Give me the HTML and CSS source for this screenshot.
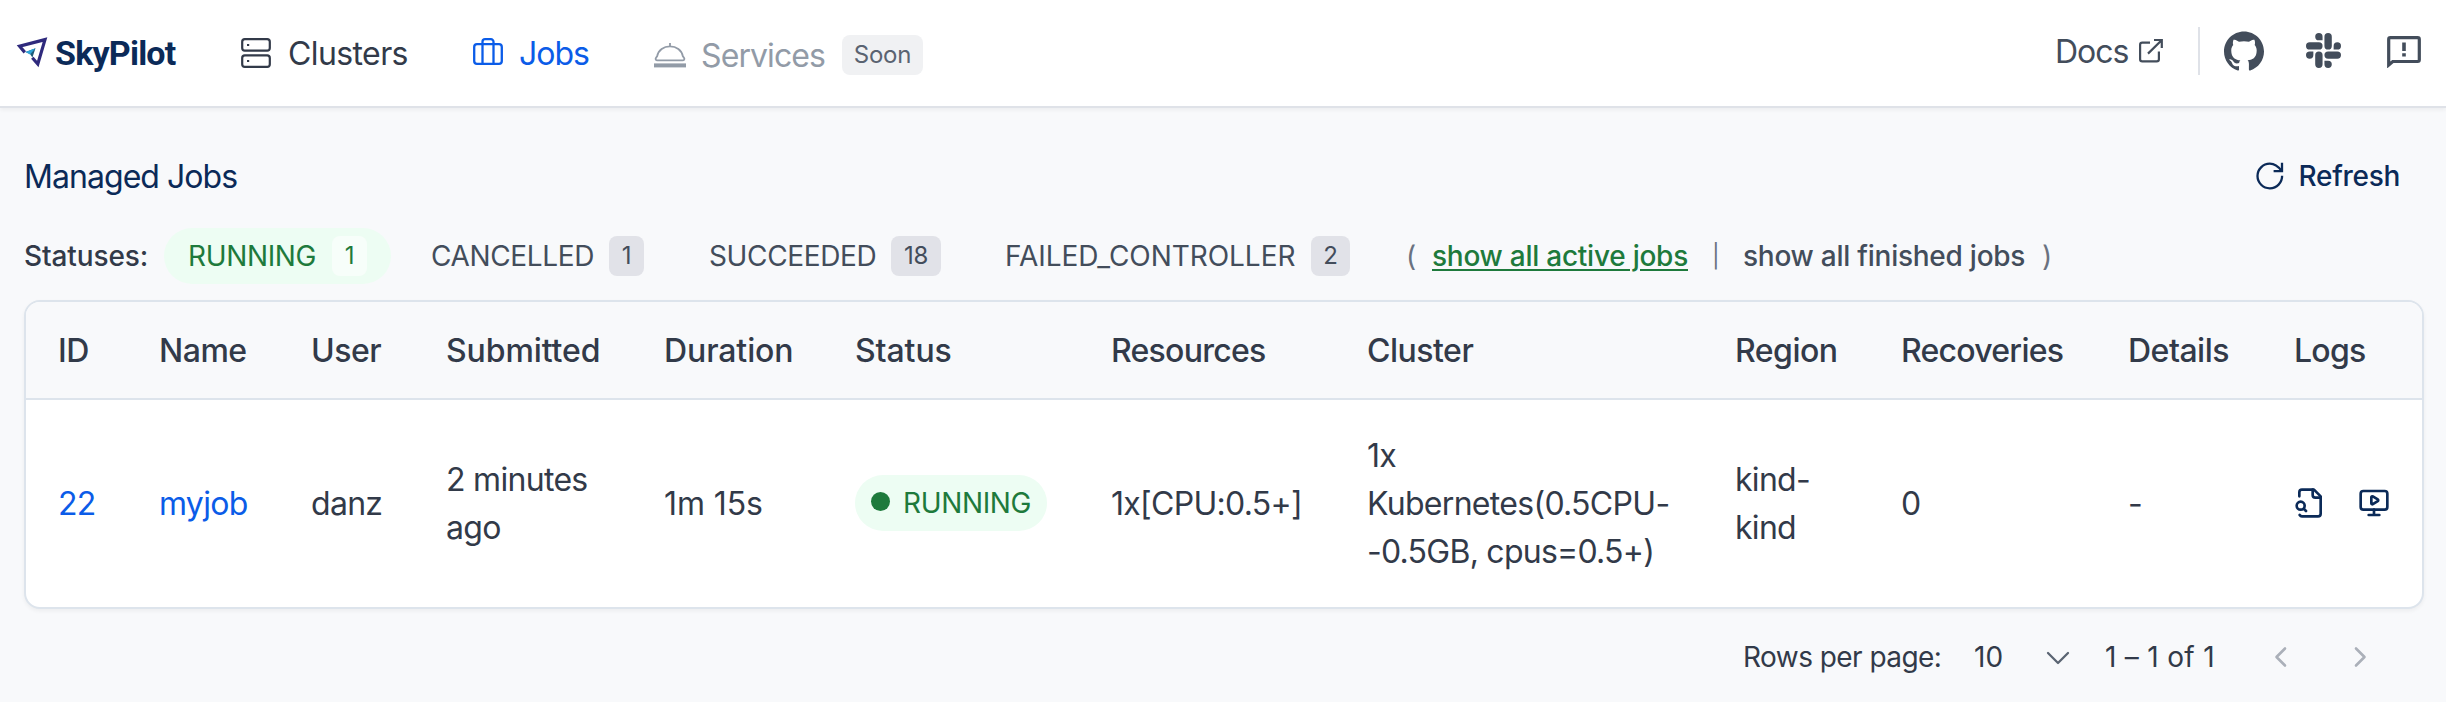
FILE: index.html
```html
<!DOCTYPE html>
<html lang="en">
<head>
<meta charset="utf-8">
<title>SkyPilot Dashboard</title>
<link rel="stylesheet" href="styles.css">
</head>
<body>
<header class="topbar">
  <a class="brand">
    <svg class="brand-mark" width="34" height="34" viewBox="0 0 34 34"><path d="M9.8 17.4 4.6 11.200 30 4.600 22.800 29 17.300 22.800" fill="none" stroke="#2f2a7d" stroke-width="3.200"/><path d="M10.500 17 20.500 13.200 17.400 22.600 15 19Z" fill="#1d5b79"/><path d="M10.500 17 20.500 13.200 15 19.600Z" fill="#2fa4d9"/></svg>
    <span class="brand-name">SkyPilot</span>
  </a>
  <nav class="nav">
    <a class="nav-item clusters">
      <svg width="30" height="30" viewBox="0 0 30 30" fill="none" stroke="currentColor" stroke-width="2.2"><rect x="1.2" y="1.2" width="27.6" height="11.4" rx="2.6"/><rect x="1.2" y="17.4" width="27.6" height="11.4" rx="2.6"/><path d="M6 7h2.2M6 23h2.2"/></svg>
      <span>Clusters</span>
    </a>
    <a class="nav-item jobs">
      <svg width="30" height="27" viewBox="0 0 30 27" fill="none" stroke="currentColor" stroke-width="2.3"><rect x="1.2" y="6.2" width="27.6" height="19.6" rx="2.8"/><path d="M9.5 25.8V3.8a2.6 2.6 0 0 1 2.6-2.6h5.8a2.6 2.6 0 0 1 2.6 2.6v22"/></svg>
      <span>Jobs</span>
    </a>
    <a class="nav-item services">
      <svg width="32" height="25" viewBox="0 0 32 25" fill="none" stroke="currentColor"><path d="M0 22.4h32" stroke-width="4"/><path d="M3.4 17.4h25.2c1.6 0 2.2-1.4 1.5-2.5l-1.3-1.8C27.6 7.2 22.4 3.4 16 3.4S4.4 7.2 3.2 13.1L1.9 14.9c-.7 1.1-.1 2.5 1.5 2.5ZM16 3.4V0" stroke-width="1.8"/></svg>
      <span>Services</span>
      <em class="soon">Soon</em>
    </a>
  </nav>
  <div class="links">
    <a class="docs"><span>Docs</span>
      <svg width="26" height="26" viewBox="0 0 26 26" fill="none" stroke="currentColor" stroke-width="2.2"><path d="M12 4.6H4.3a2.2 2.2 0 0 0-2.2 2.2v14.4a2.2 2.2 0 0 0 2.2 2.2h14.4a2.2 2.2 0 0 0 2.2-2.2V13.5M16 2h7.8v8M23.6 2.2 10 15.6"/></svg>
    </a>
    <i class="rule"></i>
    <svg class="github" width="40" height="40" viewBox="0 0 24 24" fill="currentColor"><path d="M12 .297c-6.63 0-12 5.373-12 12 0 5.303 3.438 9.8 8.205 11.385.6.113.82-.258.82-.577 0-.285-.01-1.04-.015-2.04-3.338.724-4.042-1.61-4.042-1.61C4.422 18.07 3.633 17.7 3.633 17.7c-1.087-.744.084-.729.084-.729 1.205.084 1.838 1.236 1.838 1.236 1.07 1.835 2.809 1.305 3.495.998.108-.776.417-1.305.76-1.605-2.665-.3-5.466-1.332-5.466-5.93 0-1.31.465-2.38 1.235-3.22-.135-.303-.54-1.523.105-3.176 0 0 1.005-.322 3.3 1.23.96-.267 1.98-.399 3-.405 1.02.006 2.04.138 3 .405 2.28-1.552 3.285-1.23 3.285-1.23.645 1.653.24 2.873.12 3.176.765.84 1.23 1.91 1.23 3.22 0 4.61-2.805 5.625-5.475 5.92.42.36.81 1.096.81 2.22 0 1.606-.015 2.896-.015 3.286 0 .315.21.69.825.57C20.565 22.092 24 17.592 24 12.297c0-6.627-5.373-12-12-12"/></svg>
    <svg class="slack" width="35" height="35" viewBox="0 0 24 24" fill="currentColor"><path d="M5.042 15.165a2.528 2.528 0 0 1-2.52 2.523A2.528 2.528 0 0 1 0 15.165a2.527 2.527 0 0 1 2.522-2.52h2.52v2.52zM6.313 15.165a2.527 2.527 0 0 1 2.521-2.52 2.527 2.527 0 0 1 2.521 2.52v6.313A2.528 2.528 0 0 1 8.834 24a2.528 2.528 0 0 1-2.521-2.522v-6.313zM8.834 5.042a2.528 2.528 0 0 1-2.521-2.52A2.528 2.528 0 0 1 8.834 0a2.528 2.528 0 0 1 2.521 2.522v2.52H8.834zM8.834 6.313a2.528 2.528 0 0 1 2.521 2.521 2.528 2.528 0 0 1-2.521 2.521H2.522A2.528 2.528 0 0 1 0 8.834a2.528 2.528 0 0 1 2.522-2.521h6.312zM18.956 8.834a2.528 2.528 0 0 1 2.522-2.521A2.528 2.528 0 0 1 24 8.834a2.528 2.528 0 0 1-2.522 2.521h-2.522V8.834zM17.688 8.834a2.528 2.528 0 0 1-2.523 2.521 2.527 2.527 0 0 1-2.52-2.521V2.522A2.527 2.527 0 0 1 15.165 0a2.528 2.528 0 0 1 2.523 2.522v6.312zM15.165 18.956a2.528 2.528 0 0 1 2.523 2.522A2.528 2.528 0 0 1 15.165 24a2.527 2.527 0 0 1-2.52-2.522v-2.522h2.52zM15.165 17.688a2.527 2.527 0 0 1-2.52-2.523 2.526 2.526 0 0 1 2.52-2.52h6.313A2.527 2.527 0 0 1 24 15.165a2.528 2.528 0 0 1-2.522 2.523h-6.313z"/></svg>
    <svg class="feedback" width="34" height="32" viewBox="0 0 34 32" fill="none" stroke="currentColor" stroke-width="3.2"><path d="M1.7 29V3.4q0-1.7 1.7-1.7h27.2q1.7 0 1.7 1.7v20.4q0 1.7-1.7 1.7H5.8Z"/><path d="M17 6.5v8.5M17 17.2v3.2" stroke-width="3.6"/></svg>
  </div>
</header>
<main class="page">
  <div class="title-row">
    <h1>Managed Jobs</h1>
    <button class="refresh">
      <svg width="28" height="28" viewBox="0 0 28 28" fill="none" stroke="currentColor" stroke-width="2.3"><path d="M26.1 13.8A12.3 12.3 0 1 1 13.8 1.7c4.6 0 8.2 2.3 11.6 7.2M26 .8v8.4h-8.4"/></svg>
      <span>Refresh</span>
    </button>
  </div>
  <div class="filters">
    <span class="filters-label">Statuses:</span>
    <span class="filter active"><span class="running">RUNNING</span><b>1</b></span>
    <span class="filter cancelled"><span>CANCELLED</span><b>1</b></span>
    <span class="filter succeeded"><span>SUCCEEDED</span><b class="wide">18</b></span>
    <span class="filter failed"><span>FAILED_CONTROLLER</span><b class="two">2</b></span>
    <span class="quick"><span class="paren">(</span><a class="on">show all active jobs</a><span class="bar">|</span><a class="off">show all finished jobs</a><span>)</span></span>
  </div>
  <div class="card">
    <table>
      <colgroup><col class="c-id"><col class="c-name"><col class="c-user"><col class="c-sub"><col class="c-dur"><col class="c-status"><col class="c-res"><col class="c-cluster"><col class="c-region"><col class="c-rec"><col class="c-det"><col class="c-logs"></colgroup>
      <thead><tr><th>ID</th><th>Name</th><th>User</th><th class="loose">Submitted</th><th class="loose">Duration</th><th class="loose">Status</th><th class="tight">Resources</th><th>Cluster</th><th>Region</th><th class="tight">Recoveries</th><th>Details</th><th class="tight">Logs</th></tr></thead>
      <tbody><tr>
        <td><a>22</a></td><td><a>myjob</a></td><td>danz</td><td>2 minutes<br>ago</td><td class="loose">1m 15s</td>
        <td><span class="status"><i></i><span class="running">RUNNING</span></span></td>
        <td class="nowrap">1x[CPU:0.5+]</td><td class="nowrap">1x<br>Kubernetes(0.5CPU-<br><span class="tight">-0.5GB, cpus=0.5+)</span></td><td>kind-<br>kind</td><td>0</td><td>-</td>
        <td><span class="logs">
          <svg width="32" height="32" viewBox="0 0 24 24" fill="none" stroke="currentColor" stroke-width="2" stroke-linecap="round" stroke-linejoin="round"><path d="M14 2v4a2 2 0 0 0 2 2h4"/><path d="M4.268 21a2 2 0 0 0 1.727 1H18a2 2 0 0 0 2-2V7l-5-5H6a2 2 0 0 0-2 2v3"/><path d="m9 18-1.5-1.5"/><circle cx="5" cy="14" r="3"/></svg>
          <svg width="32" height="32" viewBox="0 0 24 24" fill="none" stroke="currentColor" stroke-width="2" stroke-linecap="round" stroke-linejoin="round"><path d="M10 7.75a.75.75 0 0 1 1.142-.638l3.664 2.249a.75.75 0 0 1 0 1.278l-3.664 2.25a.75.75 0 0 1-1.142-.64z"/><path d="M12 17v4M8 21h8"/><rect x="2" y="3" width="20" height="14" rx="2"/></svg>
        </span></td>
      </tr></tbody>
    </table>
  </div>
  <div class="pager">
    <span class="rows">Rows per page:</span><span class="size">10</span>
    <svg class="caret" width="24" height="14" viewBox="0 0 24 14" fill="none" stroke="#5b6573" stroke-width="2.3" stroke-linecap="round" stroke-linejoin="round"><path d="m2 2 10 10L22 2"/></svg>
    <span class="range">1 – 1 of 1</span>
    <svg class="prev" width="14" height="22" viewBox="0 0 14 22" fill="none" stroke="#abb0b9" stroke-width="2.6" stroke-linecap="round" stroke-linejoin="round"><path d="m11 2.5-8.5 8.5 8.5 8.5"/></svg>
    <svg class="next" width="14" height="22" viewBox="0 0 14 22" fill="none" stroke="#abb0b9" stroke-width="2.6" stroke-linecap="round" stroke-linejoin="round"><path d="m3 2.5 8.5 8.5L3 19.5"/></svg>
  </div>
</main>
</body>
</html>
```
FILE: styles.css
```css
* { box-sizing: border-box; }
body { margin: 0; height: 702px; overflow: hidden; background: #f8f9fb; color: #323a49; font-family: Inter, "Liberation Sans", sans-serif; font-size: 32px; line-height: 48px; }
svg { display: block; flex: none; }
.topbar { display: flex; align-items: flex-start; height: 108px; background: #fff; border-bottom: 2px solid #dfe2e8; box-shadow: 0 2px 4px rgba(0,0,0,.05); white-space: nowrap; }
.brand { display: flex; gap: 6px; padding: 29px 0 0 15px; width: 241px; color: #0b2a58; }
.brand-mark { margin-top: 6px; }
.brand-name { font-family: Roboto, sans-serif; font-size: 34px; font-weight: 700; letter-spacing: -.8px; }
.nav { display: flex; letter-spacing: -.6px; }
.nav-item { display: flex; padding-top: 30px; }
.nav-item > svg { margin-right: 17px; margin-top: 8px; }
.clusters { width: 232px; }
.jobs { width: 181px; color: #0b5ce8; letter-spacing: -1px; }
.jobs > svg { margin-right: 16px; }
.services { color: #929ba7; padding-top: 32px; letter-spacing: -.9px; }
.services > svg { margin-top: 11px; margin-right: 15px; }
.services > span { width: 141px; }
.soon { margin-top: 3px; width: 81px; height: 40px; border-radius: 8px; background: #f0f1f3; color: #5a6371; font-size: 24px; font-style: normal; line-height: 40px; letter-spacing: -.2px; text-align: center; }
.links { display: flex; margin-left: auto; padding-right: 25px; color: #434d5b; }
.docs { display: flex; padding-top: 28px; width: 143px; letter-spacing: -1px; }
.docs > span { width: 83px; }
.docs > svg { margin-top: 10px; }
.rule { width: 2px; height: 48px; margin: 27px 24px 0 0; background: #dfe2e8; }
.github { margin: 31px 42px 0 0; }
.slack { margin: 33px 46px 0 0; }
.feedback { margin-top: 36px; }
.page { padding: 45px 22px 0 24px; }
.title-row { display: flex; justify-content: space-between; height: 75px; }
h1 { margin: 0; font-size: 32px; font-weight: 400; letter-spacing: -.95px; color: #0b2a58; }
.refresh { display: flex; gap: 15px; height: 48px; padding: 0; margin: -1px 24px 0 0; border: 0; background: none; color: #0b2a58; font: 500 28px/48px Inter, sans-serif; letter-spacing: -.3px; }
.refresh svg { margin-top: 10px; }
.filters { display: flex; height: 56px; font-size: 28px; line-height: 56px; white-space: nowrap; color: #434d5b; }
.filters-label { width: 140px; font-weight: 500; letter-spacing: -.1px; color: #323a49; }
.filter { display: flex; align-items: center; justify-content: space-between; height: 56px; padding: 0 24px; border-radius: 28px; letter-spacing: -.35px; }
.filter b { width: 35px; height: 40px; border-radius: 8px; background: #e1e2e8; font-size: 24px; font-weight: 400; line-height: 40px; text-align: center; }
.filter b.wide { width: 50px; }
.filter b.two { width: 39px; }
.active { width: 227px; background: #edfdf3; color: #1e7a3c; }
.active b { background: #f7fefa; }
.cancelled { width: 262px; margin-left: 15px; padding-left: 25px; }
.succeeded { width: 280px; margin-left: 17px; }
.failed { width: 393px; margin-left: 16px; letter-spacing: -.05px; }
.quick { display: flex; margin-left: 32px; color: #6a7280; }
.quick a { font-weight: 500; letter-spacing: -.25px; }
.paren { width: 26px; }
.on { width: 280px; color: #1e7a3c; text-decoration: underline; text-underline-offset: 3px; text-decoration-thickness: 2px; }
.bar { width: 31px; font-size: 23px; line-height: 56px; }
.off { width: 299px; color: #434d5b; }
.card { margin-top: 16px; height: 309px; overflow: hidden; border: 2px solid #dde4ec; border-radius: 16px; background: #fff; box-shadow: 0 2px 4px rgba(0,0,0,.05); }
table { width: 2396px; table-layout: fixed; border-collapse: collapse; }
th { height: 97px; padding: 2px 0 0 32px; border-bottom: 2px solid #dde4ec; background: #f8f9fb; font-weight: 500; letter-spacing: -.5px; text-align: left; }
td { height: 208px; padding: 0 0 0 32px; vertical-align: middle; letter-spacing: -.7px; }
th.loose, td.loose { letter-spacing: -.1px; }
.tight, th.tight { letter-spacing: -.75px; }
td a { color: #0b5ce8; }
.nowrap { white-space: nowrap; }
.c-id { width: 101px; } .c-name { width: 152px; } .c-user { width: 135px; } .c-sub { width: 218px; }
.c-dur { width: 191px; } .c-status { width: 256px; } .c-res { width: 256px; } .c-cluster { width: 368px; }
.c-region { width: 166px; } .c-rec { width: 227px; } .c-det { width: 166px; } .c-logs { width: 160px; }
.status { display: flex; align-items: center; width: 192px; height: 56px; margin-top: -1px; padding-left: 16px; border-radius: 28px; background: #edfdf3; color: #1e7a3c; font-size: 28px; letter-spacing: -.35px; white-space: nowrap; }
.status i { width: 19px; height: 19px; margin: -3px 13px 0 0; border-radius: 50%; background: #1e7a3c; }
.logs { display: flex; gap: 32px; margin-top: -1px; color: #0b2a58; }
.pager { display: flex; justify-content: flex-end; margin-top: 24px; padding-right: 57px; font-size: 28px; white-space: nowrap; }
.rows { width: 231px; letter-spacing: -.55px; } .size { width: 72px; }
.caret { margin: 18px 35px 0 0; }
.range { width: 169px; letter-spacing: .3px; }
.prev, .next { margin-top: 13px; }
.next { margin-left: 65px; }
```
